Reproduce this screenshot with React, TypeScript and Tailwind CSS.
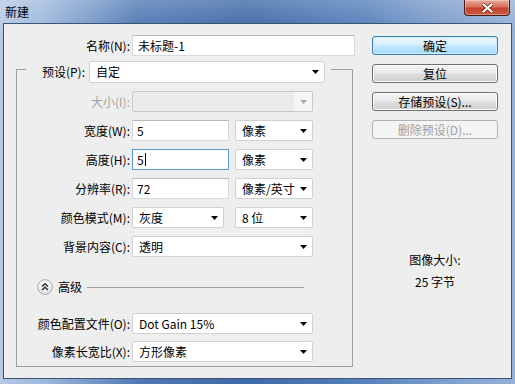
import React from "react";

function Arrow({ disabled = false }: { disabled?: boolean }) {
  return (
    <svg width="7" height="4" viewBox="0 0 7 4" className="shrink-0">
      <path d="M0 0H7L3.5 4Z" fill={disabled ? "#a8a8a8" : "#000"} />
    </svg>
  );
}

function Select({ value, width, tall = false }: { value: string; width: string; tall?: boolean }) {
  return (
    <div
      className={`${width} ${tall ? "h-[22px]" : "h-[21px]"} flex items-center justify-between rounded-[2px] border border-[#d0d0d0] bg-white pl-[6px] pr-[5px]`}
    >
      <span>{value}</span>
      <Arrow />
    </div>
  );
}

function TextBox({ value, focused = false }: { value: string; focused?: boolean }) {
  return (
    <div
      className={`flex h-[21px] w-[97px] items-center border bg-white pl-[4px] ${
        focused ? "border-[#5b9bd5]" : "border-[#d6d9de] border-t-[#b5b9bf]"
      }`}
    >
      <span>{value}</span>
      {focused && <span className="ml-[1px] h-[13px] w-px bg-black" />}
    </div>
  );
}

function Row({ label, disabled = false, children }: { label: string; disabled?: boolean; children: React.ReactNode }) {
  return (
    <div className="flex h-[21px] items-center">
      <div className={`w-[113px] text-right ${disabled ? "text-[#a3a3a3]" : ""}`}>{label}</div>
      <div className="ml-[2px] flex items-center">{children}</div>
    </div>
  );
}

function Button({ label, kind = "normal" }: { label: string; kind?: "default" | "normal" | "disabled" }) {
  const styles: Record<string, string> = {
    default:
      "border-[#3c7fb1] bg-[linear-gradient(to_bottom,#eaf6fd,#d9f0fc_45%,#bee6fd_55%,#a7d9f5)] shadow-[inset_0_0_0_1px_#cdebfa]",
    normal:
      "border-[#707070] bg-[linear-gradient(to_bottom,#f2f2f2,#ebebeb_45%,#dddddd_55%,#cfcfcf)] shadow-[inset_0_0_0_1px_#fbfbfb]",
    disabled: "border-[#adb2b5] bg-[#f4f4f4] text-[#a0a0a0]",
  };
  return (
    <div className={`flex h-[19px] w-[126px] items-center justify-center rounded-[3px] border ${styles[kind]}`}>
      {label}
    </div>
  );
}

export default function App() {
  return (
    <div className="flex h-[384px] w-[515px] flex-col overflow-hidden bg-[linear-gradient(to_bottom,rgba(255,255,255,0.22),rgba(255,255,255,0)_8%),linear-gradient(to_right,#b6cae5,#9bb6db_9%,#5079b3_27%,#3e69a7_48%,#5480b9_70%,#7d9dcb_86%,#94b1d7)] font-['Noto_Sans_CJK_SC','Noto_Sans',sans-serif] text-[12px] leading-[16px] text-black">
      {/* title bar */}
      <div className="flex h-[23px] shrink-0 items-start justify-between">
        <div className="pl-[5px] pt-[4px]">新建</div>
        <div className="mr-[5px] flex h-[16px] w-[46px] items-center justify-center rounded-b-[4px] border border-t-0 border-[#4a1a14] bg-[linear-gradient(to_bottom,#e9a99a,#d7705c_45%,#c4432d_55%,#c95a3c)] shadow-[inset_0_0_0_1px_rgba(255,255,255,0.35)]">
          <svg width="11" height="10" viewBox="0 0 11 10">
            <path d="M1.5 1.5L9.5 8.5M9.5 1.5L1.5 8.5" stroke="#6b2a20" strokeWidth="3.4" strokeLinecap="square" />
            <path d="M1.5 1.5L9.5 8.5M9.5 1.5L1.5 8.5" stroke="#fff" strokeWidth="2" strokeLinecap="square" />
          </svg>
        </div>
      </div>

      {/* client area */}
      <div className="mx-[3px] flex h-[356px] shrink-0 border border-[#3a5476] bg-[#eeeeee]">
        {/* left column */}
        <div className="flex w-[349px] shrink-0 flex-col pl-[12px] pt-[11px]">
          <div className="flex h-[21px] items-center">
            <div className="w-[114px] shrink-0 text-right">名称(N):</div>
            <div className="ml-[2px] flex h-[21px] w-[223px] shrink-0 items-center border border-[#d6d9de] border-t-[#b5b9bf] bg-white pl-[5px]">
              未标题-1
            </div>
          </div>

          <div className="mt-[13px] w-[337px] border-x border-b border-[#a0a0a0] pb-[4px]">
            {/* legend row */}
            <div className="-mt-[8px] flex h-[22px] items-start">
              <div className="mt-[8px] h-px w-[9px] bg-[#a0a0a0]" />
              <div className="flex h-[22px] w-[59px] items-center justify-end">预设(P):</div>
              <div className="ml-[4px]">
                <Select value="自定" width="w-[236px]" tall />
              </div>
              <div className="ml-[6px] mt-[8px] h-px flex-1 bg-[#a0a0a0]" />
            </div>

            <div className="mt-[8px] flex flex-col gap-[8px]">
              <Row label="大小(I):" disabled>
                <div className="flex h-[21px] w-[181px] items-center justify-end rounded-[2px] border border-[#c9c9c9] bg-[#ebebeb]">
                  <div className="flex h-full w-[18px] items-center justify-center bg-[#f5f5f5]">
                    <Arrow disabled />
                  </div>
                </div>
              </Row>
              <Row label="宽度(W):">
                <TextBox value="5" />
                <div className="ml-[6px]">
                  <Select value="像素" width="w-[78px]" />
                </div>
              </Row>
              <Row label="高度(H):">
                <TextBox value="5" focused />
                <div className="ml-[6px]">
                  <Select value="像素" width="w-[78px]" />
                </div>
              </Row>
              <Row label="分辨率(R):">
                <TextBox value="72" />
                <div className="ml-[6px]">
                  <Select value="像素/英寸" width="w-[78px]" />
                </div>
              </Row>
              <Row label="颜色模式(M):">
                <Select value="灰度" width="w-[92px]" />
                <div className="ml-[11px]">
                  <Select value="8 位" width="w-[78px]" />
                </div>
              </Row>
              <Row label="背景内容(C):">
                <Select value="透明" width="w-[181px]" />
              </Row>
            </div>

            {/* advanced toggle */}
            <div className="mt-[22px] flex h-[16px] items-center">
              <svg width="16" height="16" viewBox="0 0 16 16" className="ml-[20px] shrink-0">
                <defs>
                  <linearGradient id="cb" x1="0" y1="0" x2="0" y2="1">
                    <stop offset="0" stopColor="#ffffff" />
                    <stop offset="1" stopColor="#e4e4e4" />
                  </linearGradient>
                </defs>
                <circle cx="8" cy="8" r="7.3" fill="url(#cb)" stroke="#a3a3a3" />
                <path d="M5 7.6L8 4.8L11 7.6M5 11L8 8.2L11 11" fill="none" stroke="#2b2b2b" strokeWidth="1.4" />
              </svg>
              <span className="ml-[5px]">高级</span>
              <div className="ml-[5px] mr-[48px] h-px flex-1 bg-[#a0a0a0]" />
            </div>

            <div className="mt-[18px] flex flex-col gap-[7px]">
              <Row label="颜色配置文件(O):">
                <Select value="Dot Gain 15%" width="w-[181px]" />
              </Row>
              <Row label="像素长宽比(X):">
                <Select value="方形像素" width="w-[181px]" />
              </Row>
            </div>
          </div>
        </div>

        {/* right column */}
        <div className="ml-[19px] flex flex-col items-center pt-[12px]">
          <div className="flex flex-col gap-[9px]">
            <Button label="确定" kind="default" />
            <Button label="复位" />
            <Button label="存储预设(S)..." />
            <Button label="删除预设(D)..." kind="disabled" />
          </div>
          <div className="mt-[113px]">图像大小:</div>
          <div className="mt-[6px]">25 字节</div>
        </div>
      </div>
    </div>
  );
}
